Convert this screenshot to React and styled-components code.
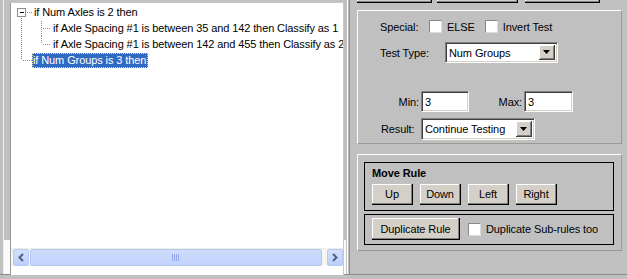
import React from "react";
import styled, { createGlobalStyle } from "styled-components";

const GlobalStyle = createGlobalStyle`
  html, body {
    margin: 0;
    padding: 0;
    background: #c0c0c0;
  }
  body {
    font-family: "Liberation Sans", Arial, sans-serif;
    font-size: 11px;
    letter-spacing: -0.1px;
    color: #000;
  }
`;

const Window = styled.div`
  width: 627px;
  height: 279px;
  overflow: hidden;
  background: #c0c0c0;
`;

const Split = styled.div`
  display: flex;
  height: 274px;
  border-bottom: 1px solid #8c8c8c;
`;

const LeftPane = styled.div`
  width: 334px;
  flex: none;
  margin-left: 3px;
  border-left: 1px solid #f0f0f0;
  padding: 2px 2px 0 6px;
  display: flex;
  flex-direction: column;
  background: linear-gradient(#c0c0c0, #c0c0c0 240px, #fbfbfb 240px);
`;

const ScrollPane = styled.div`
  width: 332px;
  border: 1px solid #c8c8c8;
  border-left-color: #9a9a9a;
  border-bottom: none;
  background: #fff;
  display: flex;
  flex-direction: column;
  padding-bottom: 9px;
`;

const Viewport = styled.div`
  height: 244px;
  padding-top: 1px;
  overflow: hidden;
`;

const TreeRow = styled.div`
  display: flex;
  align-items: center;
  height: 16px;
  white-space: nowrap;
`;

const Gutter = styled.svg`
  flex: none;
  display: block;
`;

const NodeText = styled.span`
  padding: 1px 2px 1px 1px;
  line-height: 13px;
  margin-left: ${(p) => (p.$selected ? "-1px" : "0")};
  background: ${(p) => (p.$selected ? "#316ac5" : "transparent")};
  color: ${(p) => (p.$selected ? "#fff" : "#000")};
  outline: ${(p) => (p.$selected ? "1px dotted #f0e090" : "none")};
  outline-offset: -1px;
`;

const HScroll = styled.div`
  display: flex;
  align-items: stretch;
  height: 17px;
  padding-left: 2px;
  background: #f7f7f2;
  border-top: 1px solid #eeede6;
`;

const ScrollBtn = styled.div`
  width: 14px;
  height: 15px;
  border: 1px solid #b6c9f5;
  border-radius: 2px;
  background: linear-gradient(#d4e0fd, #bccefb);
  display: flex;
  align-items: center;
  justify-content: center;
`;

const Thumb = styled.div`
  width: 290px;
  height: 15px;
  margin-left: 1px;
  border: 1px solid #b2c6f4;
  border-radius: 2px;
  background: linear-gradient(#cfdcfd, #c2d2fc);
  display: flex;
  align-items: center;
  justify-content: center;
  margin-right: 5px;
`;

const Divider = styled.div`
  width: 1px;
  flex: none;
  margin-left: 1px;
  border-left: 1px solid #fff;
  border-right: 1px solid #8c8c8c;
`;

const RightPane = styled.div`
  flex: 1;
  padding-left: 7px;
  display: flex;
  flex-direction: column;
`;

const TopBar = styled.div`
  display: flex;
  height: 3px;
  overflow: hidden;
`;

const TopButton = styled.div`
  width: ${(p) => p.$w}px;
  height: 22px;
  margin-top: -19px;
  margin-right: ${(p) => p.$mr || 0}px;
  box-sizing: border-box;
  background: #d4d0c8;
  border-right: 1px solid #000;
  border-bottom: 1px solid #000;
  box-shadow: inset -1px -1px 0 #808080, inset 1px 1px 0 #fff;
`;

const Group = styled.div`
  width: 263px;
  height: ${(p) => p.$h}px;
  margin-top: ${(p) => p.$mt}px;
  border: 1px solid #9a9a92;
  border-top-color: #fff;
  border-left-color: #fff;
  display: flex;
  flex-direction: column;
`;

const FormRow = styled.div`
  display: flex;
  align-items: center;
  height: ${(p) => p.$h}px;
  margin-top: ${(p) => p.$mt}px;
  padding-left: 22px;
`;

const Label = styled.span`
  width: ${(p) => p.$w}px;
  flex: none;
  text-align: ${(p) => p.$align || "left"};
  padding-right: ${(p) => (p.$align === "right" ? 2 : 0)}px;
  padding-left: ${(p) => p.$pl || 0}px;
  box-sizing: border-box;
  white-space: nowrap;
`;

const CheckItem = styled.label`
  display: flex;
  align-items: center;
  gap: 5px;
  margin-right: ${(p) => p.$mr || 0}px;
  white-space: nowrap;
`;

const CheckBox = styled.span`
  width: 13px;
  height: 13px;
  box-sizing: border-box;
  background: #fff;
  border: 1px solid #8a8a84;
  border-right-color: #dcdcd6;
  border-bottom-color: #dcdcd6;
  flex: none;
`;

const Sunken = styled.div`
  width: ${(p) => p.$w}px;
  height: ${(p) => p.$h}px;
  box-sizing: border-box;
  background: #fff;
  border: 1px solid #808080;
  border-right-color: #fff;
  border-bottom-color: #fff;
  box-shadow: inset 1px 1px 0 #404040, inset -1px -1px 0 #d4d0c8;
  display: flex;
  align-items: center;
  padding: 2px 2px 2px 3px;
  flex: none;
`;

const ComboText = styled.span`
  flex: 1;
  white-space: nowrap;
`;

const ComboArrow = styled.span`
  width: 16px;
  height: 100%;
  box-sizing: border-box;
  background: #d4d0c8;
  border-right: 1px solid #404040;
  border-bottom: 1px solid #404040;
  box-shadow: inset 1px 1px 0 #fff, inset -1px -1px 0 #808080;
  display: flex;
  align-items: center;
  justify-content: center;
`;

const Frame = styled.div`
  width: 241px;
  height: ${(p) => p.$h}px;
  margin-left: 6px;
  margin-top: ${(p) => p.$mt}px;
  border: 1px solid #000;
  padding-left: 7px;
  display: flex;
  flex-direction: column;
  align-items: flex-start;
`;

const FrameTitle = styled.div`
  font-weight: bold;
  line-height: 13px;
  margin-top: 4px;
`;

const ButtonRow = styled.div`
  display: flex;
  align-items: center;
  gap: ${(p) => p.$gap}px;
  margin-top: ${(p) => p.$mt}px;
`;

const Button = styled.div`
  width: ${(p) => p.$w}px;
  height: ${(p) => p.$h}px;
  box-sizing: border-box;
  background: #d4d0c8;
  border-right: 1px solid #000;
  border-bottom: 1px solid #000;
  box-shadow: inset -1px -1px 0 #808080, inset 1px 1px 0 #fff;
  display: flex;
  align-items: center;
  justify-content: center;
  white-space: nowrap;
  flex: none;
`;

const Dot = ({ d }) => (
  <path d={d} stroke="#8c8c8c" strokeWidth="1" strokeDasharray="1 1" fill="none" shapeRendering="crispEdges" />
);

const Chevron = ({ left }) => (
  <svg width="8" height="9" viewBox="0 0 8 9">
    <path
      d={left ? "M6 1 L2.5 4.5 L6 8" : "M2 1 L5.5 4.5 L2 8"}
      stroke="#4d6185"
      strokeWidth="2"
      fill="none"
    />
  </svg>
);

const Arrow = () => (
  <svg width="7" height="4" viewBox="0 0 7 4">
    <path d="M0 0 H7 L3.5 4 Z" fill="#000" />
  </svg>
);

const Combo = ({ w, h, text }) => (
  <Sunken $w={w} $h={h} style={{ paddingRight: 2 }}>
    <ComboText>{text}</ComboText>
    <ComboArrow>
      <Arrow />
    </ComboArrow>
  </Sunken>
);

const Tree = () => (
  <Viewport>
    <TreeRow>
      <Gutter width="22" height="16">
        <rect x="6.5" y="4.5" width="8" height="8" fill="#fff" stroke="#8c8c8c" />
        <path d="M8.5 8.5 H12.5" stroke="#000" shapeRendering="crispEdges" />
        <Dot d="M16 8.5 H21" />
        <Dot d="M10.5 14 V16" />
      </Gutter>
      <NodeText>if Num Axles is 2 then</NodeText>
    </TreeRow>
    <TreeRow>
      <Gutter width="41" height="16">
        <Dot d="M10.5 0 V16" />
        <Dot d="M30.5 1 V16" />
        <Dot d="M32 8.5 H40" />
      </Gutter>
      <NodeText>if Axle Spacing #1 is between 35 and 142 then Classify as 1</NodeText>
    </TreeRow>
    <TreeRow>
      <Gutter width="41" height="16">
        <Dot d="M10.5 0 V16" />
        <Dot d="M30.5 0 V8" />
        <Dot d="M32 8.5 H40" />
      </Gutter>
      <NodeText>if Axle Spacing #1 is between 142 and 455 then Classify as 2</NodeText>
    </TreeRow>
    <TreeRow>
      <Gutter width="22" height="16">
        <Dot d="M10.5 0 V8" />
        <Dot d="M12 8.5 H21" />
      </Gutter>
      <NodeText $selected>if Num Groups is 3 then</NodeText>
    </TreeRow>
  </Viewport>
);

const Grip = () => (
  <svg width="8" height="7" viewBox="0 0 8 7">
    {[0.5, 2.5, 4.5, 6.5].map((x) => (
      <path key={x} d={`M${x} 0 V7`} stroke="#8fa8e8" />
    ))}
  </svg>
);

export default function App() {
  return (
    <Window>
      <GlobalStyle />
      <Split>
        <LeftPane>
          <ScrollPane>
            <Tree />
            <HScroll>
              <ScrollBtn>
                <Chevron left />
              </ScrollBtn>
              <Thumb>
                <Grip />
              </Thumb>
              <ScrollBtn>
                <Chevron />
              </ScrollBtn>
            </HScroll>
          </ScrollPane>
        </LeftPane>
        <Divider />
        <RightPane>
          <TopBar>
            <TopButton $w={75} $mr={5} />
            <TopButton $w={81} $mr={7} />
            <TopButton $w={75} />
          </TopBar>
          <Group $h={132} $mt={7}>
            <FormRow $h={13} $mt={9}>
              <Label $w={49}>Special:</Label>
              <CheckItem $mr={10}>
                <CheckBox />
                ELSE
              </CheckItem>
              <CheckItem>
                <CheckBox />
                Invert Test
              </CheckItem>
            </FormRow>
            <FormRow $h={21} $mt={9}>
              <Label $w={65}>Test Type:</Label>
              <Combo w={113} h={21} text="Num Groups" />
            </FormRow>
            <FormRow $h={21} $mt={28}>
              <Label $w={41} $align="right">Min:</Label>
              <Sunken $w={48} $h={21}>3</Sunken>
              <Label $w={55} $align="right">Max:</Label>
              <Sunken $w={49} $h={21}>3</Sunken>
            </FormRow>
            <FormRow $h={22} $mt={6}>
              <Label $w={41} $pl={1}>Result:</Label>
              <Combo w={114} h={22} text="Continue Testing" />
            </FormRow>
          </Group>
          <Group $h={95} $mt={10}>
            <Frame $h={47} $mt={7}>
              <FrameTitle>Move Rule</FrameTitle>
              <ButtonRow $gap={7} $mt={4}>
                <Button $w={41} $h={21}>Up</Button>
                <Button $w={41} $h={21}>Down</Button>
                <Button $w={41} $h={21}>Left</Button>
                <Button $w={41} $h={21}>Right</Button>
              </ButtonRow>
            </Frame>
            <Frame $h={29} $mt={3}>
              <ButtonRow $gap={8} $mt={3}>
                <Button $w={88} $h={22}>Duplicate Rule</Button>
                <CheckItem>
                  <CheckBox />
                  Duplicate Sub-rules too
                </CheckItem>
              </ButtonRow>
            </Frame>
          </Group>
        </RightPane>
      </Split>
    </Window>
  );
}
